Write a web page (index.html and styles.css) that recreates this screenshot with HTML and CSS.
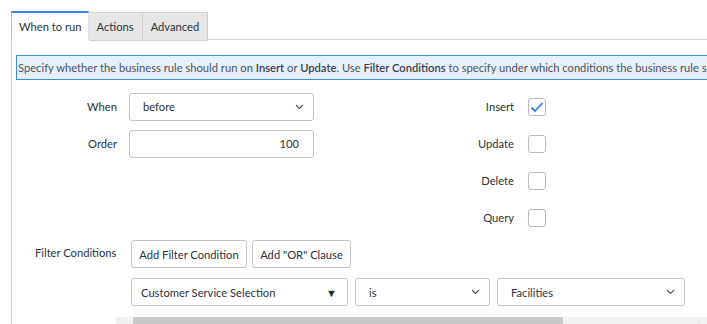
FILE: index.html
```html
<!DOCTYPE html>
<html>
<head>
    <title>Business Rule - When to run</title>
    <meta charset="UTF-8">
    <link rel="stylesheet" href="styles.css">
</head>
<body>
    <div class="tabs">
        <div class="tab active">When to run</div>
        <div class="tab">Actions</div>
        <div class="tab">Advanced</div>
        <div class="tab-fill"></div>
    </div>

    <div class="panel">
        <div class="info">
            Specify whether the business rule should run on <b>Insert</b> or <b>Update</b>. Use <b>Filter Conditions</b> to specify under which conditions the business rule should run.
        </div>

        <div class="form-grid">
            <label class="label">When</label>
            <div class="select field">
                <span>before</span>
                <svg class="chevron" width="9" height="6" viewBox="0 0 9 6"><path d="M1 1l3.5 3.5L8 1" fill="none" stroke="#555" stroke-width="1.2"/></svg>
            </div>
            <label class="label right">Insert</label>
            <div class="checkbox checked">
                <svg width="14" height="12" viewBox="0 0 14 12"><path d="M1.5 6.5l3.5 3.5L12.5 2" fill="none" stroke="#2d7ee0" stroke-width="1.8"/></svg>
            </div>

            <label class="label">Order</label>
            <div class="input field">100</div>
            <label class="label right">Update</label>
            <div class="checkbox"></div>

            <div></div>
            <div></div>
            <label class="label right">Delete</label>
            <div class="checkbox"></div>

            <div></div>
            <div></div>
            <label class="label right">Query</label>
            <div class="checkbox"></div>
        </div>

        <div class="filter">
            <div class="filter-label">Filter Conditions</div>
            <div class="filter-body">
                <div class="buttons">
                    <button class="btn btn-filter">Add Filter Condition</button>
                    <button class="btn btn-or">Add "OR" Clause</button>
                </div>
                <div class="condition">
                    <div class="select cond-field">
                        <span>Customer Service Selection</span>
                        <span class="triangle">&#9660;</span>
                    </div>
                    <div class="select cond-op">
                        <span>is</span>
                        <svg class="chevron" width="9" height="6" viewBox="0 0 9 6"><path d="M1 1l3.5 3.5L8 1" fill="none" stroke="#555" stroke-width="1.2"/></svg>
                    </div>
                    <div class="select cond-value">
                        <span>Facilities</span>
                        <svg class="chevron" width="9" height="6" viewBox="0 0 9 6"><path d="M1 1l3.5 3.5L8 1" fill="none" stroke="#555" stroke-width="1.2"/></svg>
                    </div>
                </div>
            </div>
        </div>

        <div class="hscroll">
            <div class="hscroll-arrow">&#9664;</div>
            <div class="hscroll-thumb"></div>
            <div class="hscroll-track"><span class="hscroll-arrow-r">&#9654;</span></div>
        </div>
    </div>
</body>
</html>
```

FILE: styles.css
```css
body {
    font-family: Lato, "Liberation Sans", sans-serif;
    font-size: 11.2px;
    color: #2b333c;
    margin: 0;
    padding: 11px 0 0 11px;
    overflow: hidden;
    background: #fff;
}
.tabs {
    display: flex;
    height: 29px;
}
.tab {
    padding: 0 8px;
    line-height: 27px;
    background: #e6e6e6;
    border-top: 1px solid #d6d6d6;
    border-right: 1px solid #cfcfcf;
    border-bottom: 1px solid #cfcfcf;
    margin-top: 1px;
    height: 27px;
}
.tab.active {
    background: #fff;
    border-top: 2px solid #3b8ae0;
    border-left: 1px solid #9fc2ea;
    border-right: 1px solid #d8e0ea;
    border-bottom: none;
    margin-top: 0;
    padding: 0 6px 0 7px;
    height: 27px;
    line-height: 28px;
}
.tab-fill {
    flex: 1;
    border-bottom: 1px solid #cfcfcf;
}
.panel {
    border-left: 1px solid #cfcfcf;
    padding: 15px 0 0 4px;
    height: 300px;
}
.info {
    width: 760px;
    height: 23px;
    line-height: 23px;
    padding-left: 1px;
    background: #e6f0fa;
    border: 1px solid #3f8bdc;
    color: #4d555e;
    white-space: nowrap;
    overflow: hidden;
}
.info b {
    font-weight: 600;
    color: #3a424b;
}
.form-grid {
    display: grid;
    grid-template-columns: 113px 185px 214px 18px;
    grid-auto-rows: 37px;
    align-items: center;
    margin-top: 8px;
}
.label {
    text-align: right;
    padding-right: 12px;
}
.label.right {
    padding-right: 14px;
}
.field {
    border: 1px solid #c4c4c4;
    border-radius: 3px;
    box-sizing: border-box;
    height: 28px;
    display: flex;
    align-items: center;
}
.select {
    justify-content: space-between;
    padding: 0 9px 0 13px;
}
.input {
    justify-content: flex-end;
    padding-right: 14px;
}
.chevron {
    display: block;
}
.checkbox {
    width: 18px;
    height: 18px;
    box-sizing: border-box;
    border: 1px solid #b9b9b9;
    border-radius: 3px;
    display: flex;
    align-items: center;
    justify-content: center;
}
.filter {
    display: flex;
    margin-top: 4px;
}
.filter-label {
    width: 96px;
    padding-left: 19px;
    padding-top: 6px;
    white-space: nowrap;
}
.filter-body {
    display: flex;
    flex-direction: column;
    gap: 10px;
}
.buttons {
    display: flex;
    gap: 5px;
}
.btn {
    font-family: inherit;
    font-size: 11.2px;
    color: #2b333c;
    background: #fff;
    border: 1px solid #c4c4c4;
    border-radius: 3px;
    height: 28px;
    padding: 0;
    white-space: nowrap;
}
.btn-filter {
    width: 116px;
}
.btn-or {
    width: 99px;
}
.condition {
    display: flex;
    gap: 7px;
}
.condition .select {
    height: 28px;
    border: 1px solid #c4c4c4;
    border-radius: 3px;
    box-sizing: border-box;
    display: flex;
    align-items: center;
}
.cond-field {
    width: 217px;
    padding: 0 10px 0 9px !important;
}
.triangle {
    font-size: 11px;
    color: #2b2b2b;
}
.cond-op {
    width: 135px;
}
.cond-value {
    width: 188px;
}
.hscroll {
    display: flex;
    height: 17px;
    margin-top: 11px;
    margin-left: 100px;
}
.hscroll-arrow {
    width: 17px;
    background: #f1f1f1;
    color: #a3a3a3;
    font-size: 7px;
    text-align: center;
    line-height: 17px;
}
.hscroll-thumb {
    width: 430px;
    background: #c9c9c9;
}
.hscroll-track {
    flex: 1;
    background: #f1f1f1;
    color: #505050;
    font-size: 7px;
    text-align: right;
    line-height: 17px;
    padding-right: 4px;
}
```
